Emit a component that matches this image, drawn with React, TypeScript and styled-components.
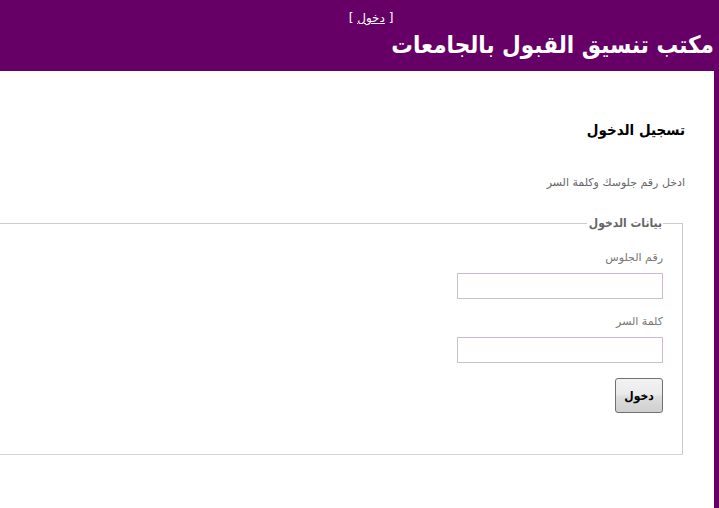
import React, { FC } from 'react';
import styled, { createGlobalStyle } from 'styled-components';

const GlobalStyle = createGlobalStyle`
    html, body {
        margin: 0;
        padding: 0;
        background: #fff;
    }
    body {
        font-family: "DejaVu Sans", "Noto Sans", sans-serif;
        overflow: hidden;
    }
`;

export const Page = styled.div`
    direction: rtl;
    width: 719px;
    height: 508px;
    overflow: hidden;
    display: flex;
    flex-direction: column;
`;

export const Header = styled.div`
    background: #660066;
    height: 71px;
    padding-right: 5px;
    box-sizing: border-box;
    color: #fff;
`;

export const TopLinks = styled.div`
    text-align: center;
    padding: 11px 0 0 28px;
    font-size: 12px;
    line-height: 14px;
    a {
        color: #fff;
        text-decoration: underline;
    }
`;

export const Title = styled.h1`
    margin: 3px 0 0;
    font-family: "DejaVu Sans Condensed", "DejaVu Sans", sans-serif;
    font-size: 24px;
    line-height: 34px;
    font-weight: bold;
    white-space: nowrap;
`;

export const Main = styled.div`
    flex: 1;
    border-right: 5px solid #660066;
    padding: 48px 29px 0 0;
`;

export const Heading = styled.h2`
    margin: 0;
    font-family: "DejaVu Sans Condensed", "DejaVu Sans", sans-serif;
    font-size: 15px;
    line-height: 22px;
    font-weight: bold;
    color: #000;
`;

export const Hint = styled.p`
    margin: 34px 0 0 1px;
    font-size: 11px;
    line-height: 16px;
    color: #666;
`;

export const LoginBox = styled.fieldset`
    width: 720px;
    margin: 25px 2px 0 0;
    padding: 20px 19px 41px;
    border: 1px solid #ccc;
    border-bottom-color: #d0d6ce;
    box-sizing: border-box;
    legend {
        padding: 0 1px 0 2px;
        font-family: "DejaVu Sans Condensed", "DejaVu Sans", sans-serif;
        font-size: 12px;
        font-weight: bold;
        color: #666;
    }
`;

export const Field = styled.div`
    margin-bottom: 15px;
`;

export const Label = styled.label`
    display: block;
    font-size: 11px;
    line-height: 16px;
    color: #777;
    margin-bottom: 7px;
`;

export const TextBox = styled.input`
    display: block;
    width: 206px;
    height: 26px;
    box-sizing: border-box;
    border: 1px solid #c4c4c4;
    border-top-color: #cfb8cf;
    border-right-color: #cfb8cf;
    background: #fff;
    padding: 2px 4px;
`;

export const SubmitButton = styled.button`
    display: block;
    width: 48px;
    height: 35px;
    margin-top: 0;
    border: 1px solid #707070;
    border-radius: 3px;
    background: linear-gradient(#f2f2f2, #ebebeb 45%, #dddddd 55%, #cfcfcf);
    font-family: "DejaVu Sans Condensed", "DejaVu Sans", sans-serif;
    font-size: 12px;
    font-weight: bold;
    color: #000;
    padding: 0;
`;

const App: FC = () => (
    <Page>
        <GlobalStyle />
        <Header>
            <TopLinks>
                [ <a href="#">دخول</a> ]
            </TopLinks>
            <Title>مكتب تنسيق القبول بالجامعات</Title>
        </Header>

        <Main>
            <Heading>تسجيل الدخول</Heading>
            <Hint>ادخل رقم جلوسك وكلمة السر</Hint>

            <LoginBox>
                <legend>بيانات الدخول</legend>
                <Field>
                    <Label>رقم الجلوس</Label>
                    <TextBox type="text" />
                </Field>
                <Field>
                    <Label>كلمة السر</Label>
                    <TextBox type="password" />
                </Field>
                <SubmitButton type="submit">دخول</SubmitButton>
            </LoginBox>
        </Main>
    </Page>
);

export default App;
